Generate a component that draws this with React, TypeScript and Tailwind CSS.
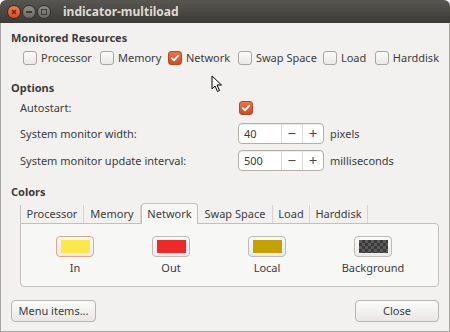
import React from "react";

const font = { fontFamily: '"Noto Sans", "DejaVu Sans", sans-serif' };

function Check({ checked = false }: { checked?: boolean }) {
  if (checked) {
    return (
      <span className="inline-flex h-[14px] w-[14px] shrink-0 items-center justify-center rounded-[3px] border border-[#b24a22] bg-gradient-to-b from-[#ec7449] to-[#cf4c20]">
        <svg width="10" height="10" viewBox="0 0 10 10">
          <path d="M1.8 5.2 L4 7.4 L8.3 2.6" fill="none" stroke="#fff" strokeWidth="1.8" strokeLinecap="round" strokeLinejoin="round" />
        </svg>
      </span>
    );
  }
  return <span className="inline-block h-[14px] w-[14px] shrink-0 rounded-[3px] border border-[#a9a6a1] bg-gradient-to-b from-[#fbfbfa] to-[#e9e8e6]" />;
}

function CheckItem({ label, checked }: { label: string; checked?: boolean }) {
  return (
    <div className="flex items-center gap-[4px] whitespace-nowrap">
      <Check checked={checked} />
      <span>{label}</span>
    </div>
  );
}

function Spin({ value }: { value: string }) {
  return (
    <div className="flex h-[21px] w-[86px] rounded-[4px] border border-[#b3b0aa] bg-white shadow-[inset_0_1px_1px_rgba(0,0,0,0.08)]">
      <div className="flex w-[42px] items-center pl-[5px] text-[#3c3c3c]">{value}</div>
      <div className="flex w-[22px] items-center justify-center border-l border-[#dcdad6] text-[15px] leading-none text-[#4c4c4c]">−</div>
      <div className="flex w-[21px] items-center justify-center border-l border-[#dcdad6] text-[15px] leading-none text-[#4c4c4c]">+</div>
    </div>
  );
}

function Swatch({ color, focus, checker, label }: { color?: string; focus?: boolean; checker?: boolean; label: string }) {
  return (
    <div className="flex w-[96px] flex-col items-center">
      <div
        className={`flex h-[21px] w-[38px] items-center justify-center rounded-[4px] border bg-gradient-to-b from-[#fbfbfa] to-[#ebeae8] ${focus ? "border-[#e7a487]" : "border-[#bdbab5]"}`}
      >
        {checker ? (
          <div
            className="h-[13px] w-[29px]"
            style={{
              backgroundColor: "#5a5a5a",
              backgroundImage:
                "linear-gradient(45deg, #3a3a3a 25%, transparent 25%, transparent 75%, #3a3a3a 75%), linear-gradient(45deg, #3a3a3a 25%, transparent 25%, transparent 75%, #3a3a3a 75%)",
              backgroundSize: "6px 6px",
              backgroundPosition: "0 0, 3px 3px",
            }}
          />
        ) : (
          <div className="h-[13px] w-[29px]" style={{ backgroundColor: color }} />
        )}
      </div>
      <div className="mt-[4px] h-[14px] leading-[14px]">{label}</div>
    </div>
  );
}

const tabs: [string, number][] = [
  ["Processor", 64],
  ["Memory", 57],
  ["Network", 57],
  ["Swap Space", 75],
  ["Load", 37],
  ["Harddisk", 58],
];

export default function App() {
  return (
    <div className="h-[332px] w-[450px] bg-white text-[11px] leading-[16px] text-[#3c3c3c]" style={font}>
      <div className="flex h-[332px] flex-col overflow-hidden rounded-t-[6px]">
        {/* title bar */}
        <div className="flex h-[23px] shrink-0 items-center bg-gradient-to-b from-[#575651] to-[#3c3b37] pl-[7px]">
          <div className="flex items-center gap-[1px]">
            <span className="flex h-[14px] w-[14px] items-center justify-center rounded-full border border-[#3a2a22] bg-gradient-to-b from-[#f37a4b] to-[#de4a1e]">
              <svg width="6" height="6" viewBox="0 0 6 6">
                <path d="M1 1 L5 5 M5 1 L1 5" stroke="#5a2412" strokeWidth="1.3" />
              </svg>
            </span>
            <span className="flex h-[14px] w-[14px] items-center justify-center rounded-full border border-[#33322f] bg-gradient-to-b from-[#8f8e8a] to-[#6b6a66]">
              <span className="h-[2px] w-[6px] bg-[#3c3b37]" />
            </span>
            <span className="flex h-[14px] w-[14px] items-center justify-center rounded-full border border-[#33322f] bg-gradient-to-b from-[#8f8e8a] to-[#6b6a66]">
              <span className="h-[6px] w-[6px] border border-[#3c3b37]" />
            </span>
          </div>
          <div className="ml-[12px] text-[12px] font-bold text-[#dfdbd2]">indicator-multiload</div>
        </div>
        {/* body */}
        <div className="relative flex flex-1 flex-col border-x border-b border-[#a8a6a2] bg-[#f2f1f0] px-[10px]">
          <div className="mt-[7px] h-[16px] font-bold">Monitored Resources</div>
          <div className="mt-[4px] flex h-[16px] items-center pl-[12px]">
            <div className="w-[77px]"><CheckItem label="Processor" /></div>
            <div className="w-[68px]"><CheckItem label="Memory" /></div>
            <div className="w-[70px]"><CheckItem label="Network" checked /></div>
            <div className="w-[85px]"><CheckItem label="Swap Space" /></div>
            <div className="w-[52px]"><CheckItem label="Load" /></div>
            <CheckItem label="Harddisk" />
          </div>

          <div className="mt-[14px] h-[16px] font-bold">Options</div>
          <div className="mt-[4px] flex h-[16px] items-center pl-[9px]">
            <div className="w-[219px]">Autostart:</div>
            <Check checked />
          </div>
          <div className="mt-[7px] flex h-[21px] items-center pl-[9px]">
            <div className="w-[218px]">System monitor width:</div>
            <Spin value="40" />
            <div className="ml-[6px]">pixels</div>
          </div>
          <div className="mt-[6px] flex h-[21px] items-center pl-[9px]">
            <div className="w-[218px]">System monitor update interval:</div>
            <Spin value="500" />
            <div className="ml-[6px]">milliseconds</div>
          </div>

          <div className="mt-[13px] h-[16px] font-bold">Colors</div>
          <div className="mt-[3px] pl-[9px]">
            <div className="flex h-[20px] items-end">
              {tabs.map(([t, w]) =>
                t === "Network" ? (
                  <div
                    key={t}
                    style={{ width: w }}
                    className="relative z-10 -mb-[1px] flex h-[21px] items-center justify-center rounded-t-[4px] border border-b-0 border-[#c3c0bb] bg-[#f7f7f6]"
                  >
                    {t}
                  </div>
                ) : (
                  <div
                    key={t}
                    style={{ width: w }}
                    className="flex h-[18px] items-center justify-center border-r border-[#d7d4cf] first:border-l first:border-l-[#c3c0bb]"
                  >
                    {t}
                  </div>
                )
              )}
            </div>
            <div className="flex h-[64px] items-start rounded-b-[4px] rounded-tr-[4px] border border-[#c3c0bb] bg-[#f7f7f6] pl-[6px] pt-[12px]">
              <Swatch color="#fde84a" focus label="In" />
              <Swatch color="#ef2828" label="Out" />
              <Swatch color="#c4a000" label="Local" />
              <div className="ml-[10px]"><Swatch checker label="Background" /></div>
            </div>
          </div>

          <div className="mt-[13px] flex justify-between">
            <div className="flex h-[22px] w-[85px] items-center justify-center rounded-[4px] border border-[#b8b5b0] bg-gradient-to-b from-[#fbfbfa] to-[#e8e7e5]">Menu items...</div>
            <div className="flex h-[22px] w-[84px] items-center justify-center rounded-[4px] border border-[#b8b5b0] bg-gradient-to-b from-[#fbfbfa] to-[#e8e7e5]">Close</div>
          </div>

          {/* mouse cursor */}
          <svg className="absolute left-[210px] top-[52px]" width="12" height="18" viewBox="0 0 12 18">
            <path d="M1 1 L1 14 L4 11 L6.5 16.5 L8.5 15.5 L6 10 L10.5 10 Z" fill="#fff" stroke="#000" strokeWidth="1" strokeLinejoin="round" />
          </svg>
        </div>
      </div>
    </div>
  );
}
